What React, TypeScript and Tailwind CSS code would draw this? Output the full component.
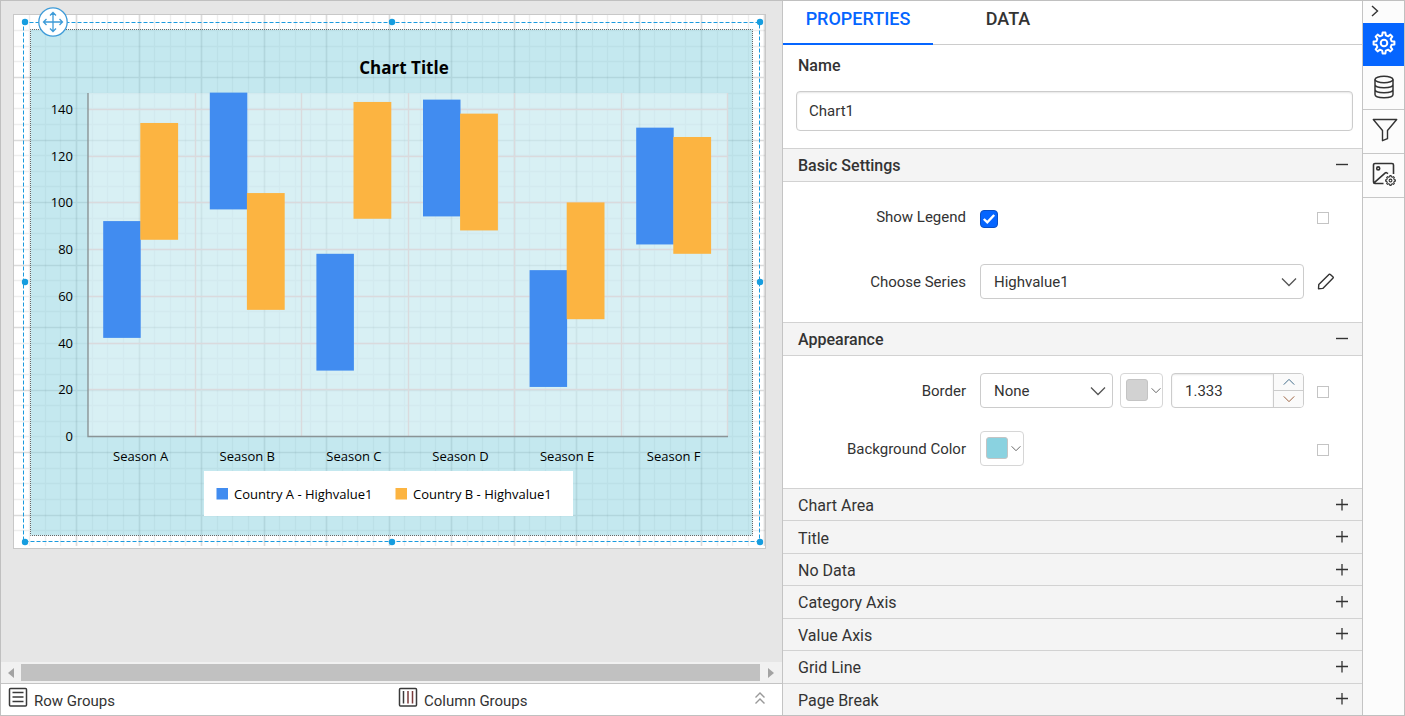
import { useState } from "react";
import type { ReactNode } from "react";

type Range = [number, number];

const seasons: { name: string; a: Range; b: Range }[] = [
  { name: "Season A", a: [42, 92], b: [84, 134] },
  { name: "Season B", a: [97, 147], b: [54, 104] },
  { name: "Season C", a: [28, 78], b: [93, 143] },
  { name: "Season D", a: [94, 144], b: [88, 138] },
  { name: "Season E", a: [21, 71], b: [50, 100] },
  { name: "Season F", a: [82, 132], b: [78, 128] },
];

const ticks = [0, 20, 40, 60, 80, 100, 120, 140];
const collapsed = ["Chart Area", "Title", "No Data", "Category Axis", "Value Axis", "Grid Line", "Page Break"];

const valueY = (v: number) => 421 - v * 2.336;
const bandX = (i: number) => 74.8 + i * 106.5;
const barX = (i: number) => 126.7 + i * 106.6;

const gridStops = (length: number, major: boolean) =>
  Array.from({ length: Math.floor(length / 15.625) }, (_, i) => i + 1)
    .filter((n) => (n % 4 === 0) === major)
    .map((n) => Math.floor(n * 15.625) + 0.5);

const gridPath = (major: boolean) =>
  gridStops(751, major).map((x) => `M${x} 0V531`).join("") + gridStops(531, major).map((y) => `M0 ${y}H751`).join("");

function gearPath(c: number, outer: number, inner: number, teeth: number) {
  const step = (Math.PI * 2) / teeth;
  const points: string[] = [];
  for (let i = 0; i < teeth; i++) {
    const mid = i * step - Math.PI / 2;
    const corners: [number, number][] = [
      [-0.3, inner],
      [-0.17, outer],
      [0.17, outer],
      [0.3, inner],
    ];
    corners.forEach(([t, r]) => {
      const angle = mid + t * step;
      points.push(`${(c + Math.cos(angle) * r).toFixed(2)} ${(c + Math.sin(angle) * r).toFixed(2)}`);
    });
  }
  return `M${points.join("L")}Z`;
}

function Chevron({ className, d = "M1 1.5l7 7 7-7" }: { className: string; d?: string }) {
  return (
    <svg viewBox="0 0 16 10" className={className} fill="none" stroke="currentColor" strokeWidth="1.3" aria-hidden="true">
      <path d={d} />
    </svg>
  );
}

function RangeChart() {
  return (
    <svg viewBox="0 0 751 533" className="block w-full" role="img" aria-label="Chart Title">
      <rect width="751" height="533" fill="#fff" />
      <path d={gridPath(false)} stroke="#000" strokeOpacity="0.065" strokeWidth="1.4" fill="none" />
      <path d={gridPath(true)} stroke="#000" strokeOpacity="0.14" strokeWidth="1.7" fill="none" />
      <rect x="16.5" y="14.5" width="722" height="506" fill="#8ad2e0" fillOpacity="0.5" />
      <rect x="16.5" y="14.5" width="722" height="506" fill="none" stroke="#666" strokeDasharray="1 1" strokeDashoffset="0.5" />
      <rect x="74" y="78" width="640" height="343" fill="#fff" fillOpacity="0.34" />

      <g stroke="#dadadd" strokeWidth="1.4">
        {ticks.slice(1).map((t) => (
          <path key={t} d={`M74 ${Math.round(valueY(t)) + 0.5}H714`} />
        ))}
        {[1, 2, 3, 4, 5, 6].map((i) => (
          <path key={i} d={`M${Math.floor(bandX(i)) + 0.5} 78V421`} />
        ))}
      </g>
      {seasons.map((s, i) => (
        <g key={s.name}>
          <rect x={barX(i) - 37.5} y={valueY(s.a[1])} width="37.5" height={valueY(s.a[0]) - valueY(s.a[1])} fill="#418cf0" />
          <rect x={barX(i) - 0.4} y={valueY(s.b[1])} width="37.8" height={valueY(s.b[0]) - valueY(s.b[1])} fill="#fcb441" />
        </g>
      ))}
      <path d="M74 78V421.500H714" fill="none" stroke="#8a9496" strokeWidth="1.400" />

      <rect x="190" y="456" width="369" height="45" fill="#fff" />
      <rect x="202.5" y="473" width="11.5" height="11.5" fill="#418cf0" />
      <rect x="381.5" y="473" width="11.5" height="11.5" fill="#fcb441" />
      <g className="font-['Open_Sans',sans-serif] text-[13px]" fill="#000">
        {ticks.map((t) => (
          <text key={t} x="59" y={valueY(t) + 5} textAnchor="end">{t}</text>
        ))}
        {seasons.map((s, i) => (
          <text key={s.name} x={barX(i)} y="446" textAnchor="middle">{s.name}</text>
        ))}
        <text x="220" y="484">Country A - Highvalue1</text>
        <text x="399" y="484">Country B - Highvalue1</text>
      </g>
      <text x="390" y="59" textAnchor="middle" className="font-['Open_Sans',sans-serif] text-[17px] font-bold">Chart Title</text>

      <rect x="9.5" y="7.5" width="736" height="519" fill="none" stroke="#1a9ade" strokeDasharray="4 2" />
      <g fill="#169ddf">
        {[[11, 7], [378, 7], [746, 7], [11, 267], [746, 267], [11, 527], [378, 527], [746, 527]].map(([x, y]) => (
          <circle key={`${x}-${y}`} cx={x} cy={y} r="3.2" />
        ))}
      </g>
    </svg>
  );
}

function Designer() {
  return (
    <main className="flex min-w-0 flex-1 flex-col bg-[#e6e6e6]">
      <div className="min-h-0 flex-1 overflow-hidden px-3 pt-[13px]">
        <div className="relative w-[753px] border border-[#c8c8c8]">
          <RangeChart />
          <button aria-label="Move chart" className="absolute -top-[8px] left-6 size-[30px] text-[#3d9bd8]">
            <svg viewBox="0 0 30 30" fill="none" stroke="currentColor" strokeWidth="1.3" aria-hidden="true">
              <circle cx="15" cy="15" r="14.2" fill="#fff" />
              <path d="M15 5.500v19M5.500 15h19M12 8.500l3-3 3 3M12 21.500l3 3 3-3M8.500 12l-3 3 3 3M21.500 12l3 3-3 3" />
            </svg>
          </button>
        </div>
      </div>
      <div className="flex h-[21px] items-center bg-[#f1f1f1]">
        <button aria-label="Scroll left" className="flex w-5 justify-center text-[#a3a3a3]">
          <svg viewBox="0 0 6 10" className="h-[10px] w-[6px]" fill="currentColor"><path d="M6 0v10L0 5z" /></svg>
        </button>
        <div className="h-[17px] flex-1 bg-[#c1c1c1]" />
        <button aria-label="Scroll right" className="flex w-[22px] justify-center text-[#a3a3a3]">
          <svg viewBox="0 0 6 10" className="h-[10px] w-[6px]" fill="currentColor"><path d="M0 0v10l6-5z" /></svg>
        </button>
      </div>
      <div className="flex h-8 items-center border-t border-[#c4c4c4] bg-white pr-3 pl-[7px] text-[15px] text-[#333]">
        <div className="flex w-1/2 gap-[6px]">
          <svg viewBox="0 0 20 20" className="size-5" fill="none" stroke="#3a3a3a" strokeWidth="1.5" aria-hidden="true">
            <rect x="1.500" y="1.500" width="17" height="17.500" rx="1" />
            <path d="M4.500 5.500h11M4.500 10h11M4.500 14.500h11" />
          </svg>
          <span className="pt-[3px]">Row Groups</span>
        </div>
        <div className="ml-[9px] flex flex-1 gap-[6px]">
          <svg viewBox="0 0 20 20" className="size-5" fill="none" stroke="#3a3a3a" strokeWidth="1.5" aria-hidden="true">
            <rect x="1.500" y="1.500" width="17" height="17.500" rx="1" />
            <path d="M5.500 4v12.500" />
            <path d="M10 4v12.500M14.500 4v12.500" stroke="#7a3b3b" />
          </svg>
          <span className="pt-[3px]">Column Groups</span>
        </div>
        <button aria-label="Expand groups" className="pb-1 text-[#999]">
          <svg viewBox="0 0 20 20" className="size-5" fill="none" stroke="currentColor" strokeWidth="1.4">
            <path d="M5.500 9.500L10 5l4.500 4.500M5.500 15.500L10 11l4.500 4.500" />
          </svg>
        </button>
      </div>
    </main>
  );
}

function SectionHeader({ title }: { title: string }) {
  return (
    <button className="flex h-[34px] w-full items-center justify-between border-y border-[#d2d2d2] bg-[#f4f4f4] pr-[14px] pl-[15px] text-[16px] font-medium">
      <span className="pt-[2px]">{title}</span>
      <svg viewBox="0 0 12 12" className="size-3" stroke="#333" strokeWidth="1.4" aria-hidden="true"><path d="M0 5.500h12" /></svg>
    </button>
  );
}

function Row({ label, id, children }: { label: string; id: string; children: ReactNode }) {
  return (
    <div className="flex h-[35px] items-center">
      <label htmlFor={id} className="w-[183px] shrink-0 pt-[2px] text-right text-[15px]">{label}</label>
      <div className="ml-[14px] flex flex-1 items-center pr-[33px]">{children}</div>
    </div>
  );
}

function Marker({ label }: { label: string }) {
  return <input type="checkbox" aria-label={label} className="mt-[2px] ml-auto size-3 appearance-none border border-[#c4c4c4] bg-white" />;
}

function Dropdown({ id, value, className }: { id: string; value: string; className: string }) {
  return (
    <div className={`relative ${className}`}>
      <select id={id} defaultValue={value} className="block h-[35px] w-full appearance-none rounded-[4px] border border-[#ccc] bg-white px-[13px] pt-px text-[15px]">
        <option>{value}</option>
      </select>
      <Chevron className="pointer-events-none absolute top-[13px] right-[7px] h-[10px] w-4 text-[#555]" />
    </div>
  );
}

function ColorPicker({ id, label, swatch, className }: { id: string; label: string; swatch: string; className: string }) {
  return (
    <button id={id} aria-label={label} className={`flex h-[35px] items-center gap-[3px] rounded-[4px] border border-[#d6d6d6] bg-white pl-[5px] ${className}`}>
      <span className={`-mt-[2px] size-[22px] rounded-[3px] border border-[#c4c4c4] ${swatch}`} />
      <Chevron className="h-[7px] w-[10px] text-[#444]" />
    </button>
  );
}

function Properties() {
  const [legend, setLegend] = useState(true);
  return (
    <aside className="flex w-[580px] shrink-0 flex-col border-l border-[#c4c4c4] bg-white">
      <div role="tablist" className="flex h-11 border-b border-[#ccc] text-[18px] font-medium">
        <button role="tab" aria-selected="true" className="-mb-px w-[150px] border-b-2 border-[#0565ff] pb-2 text-[#0565ff]">PROPERTIES</button>
        <button role="tab" aria-selected="false" className="w-[150px] pb-[9px]">DATA</button>
      </div>
      <div className="h-[103px] pt-[10px] pr-[9px] pl-[13px]">
        <label htmlFor="name" className="block pl-[2px] text-[16px] leading-[22px] font-medium">Name</label>
        <input id="name" defaultValue="Chart1" className="mt-[14px] h-10 w-full rounded-[4px] border border-[#ccc] px-3 text-[15px] shadow-[inset_0_1px_2px_rgba(0,0,0,0.1)]" />
      </div>
      <SectionHeader title="Basic Settings" />
      <div className="flex h-[140px] flex-col gap-[30px] pt-[17px]">
        <Row label="Show Legend" id="legend">
          <span className="relative mt-1 size-[18px]">
            <input id="legend" type="checkbox" checked={legend} onChange={(e) => setLegend(e.target.checked)} className="block size-[18px] appearance-none rounded-[4px] border border-[#0a4fc4] checked:bg-[#0565ff]" />
            {legend && (
              <svg viewBox="0 0 18 18" className="pointer-events-none absolute inset-0" fill="none" stroke="#fff" strokeWidth="2.4" aria-hidden="true"><path d="M3.800 9l3.500 3.300L14.200 5" /></svg>
            )}
          </span>
          <Marker label="Show Legend expression" />
        </Row>
        <Row label="Choose Series" id="series">
          <Dropdown id="series" value="Highvalue1" className="w-[324px]" />
          <button aria-label="Edit series" className="ml-[12px]">
            <svg viewBox="0 0 20 20" className="size-5" fill="none" stroke="#333" strokeWidth="1.4" strokeLinejoin="round">
              <path d="M2.500 16.800l.3-4.400L13.200 2.300c.3-.3.600-.3.900 0l3 2.800c.3.300.3.600 0 .9L6.800 16.400z" />
            </svg>
          </button>
        </Row>
      </div>
      <SectionHeader title="Appearance" />
      <div className="flex h-[132px] flex-col gap-[23px] pt-[17px]">
        <Row label="Border" id="border">
          <Dropdown id="border" value="None" className="w-[133px]" />
          <ColorPicker id="border-color" label="Border color" swatch="bg-[#d2d2d2]" className="ml-[7px] w-[43px]" />
          <div className="ml-2 flex h-[35px] w-[133px] overflow-hidden rounded-[4px] border border-[#ccc]">
            <input aria-label="Border width" defaultValue="1.333" className="min-w-0 flex-1 px-[13px] pt-px text-[15px] shadow-[inset_0_1px_2px_rgba(0,0,0,0.1)]" />
            <div className="flex w-[30px] flex-col border-l border-[#ccc] bg-[#fafafa]">
              <button aria-label="Increase" className="flex flex-1 items-center justify-center border-b border-[#ccc] text-[#3f6a88]">
                <Chevron className="h-[8px] w-[12px]" d="M1 8.500l7-7 7 7" />
              </button>
              <button aria-label="Decrease" className="flex flex-1 items-center justify-center text-[#9a5f3c]">
                <Chevron className="h-[8px] w-[12px]" />
              </button>
            </div>
          </div>
          <Marker label="Border expression" />
        </Row>
        <Row label="Background Color" id="background">
          <ColorPicker id="background" label="Background Color" swatch="bg-[#8ad2e0]" className="w-11" />
          <Marker label="Background Color expression" />
        </Row>
      </div>
      <div className="flex flex-1 flex-col">
        {collapsed.map((title) => (
          <button key={title} className="flex min-h-8 flex-1 items-center justify-between border-t border-[#d2d2d2] bg-[#f4f4f4] pr-[14px] pl-[15px] text-[16px]">
            <span className="pt-[3px]">{title}</span>
            <svg viewBox="0 0 12 12" className="size-3" stroke="#333" strokeWidth="1.3" aria-hidden="true"><path d="M0 5.500h12M6 0v11.500" /></svg>
          </button>
        ))}
      </div>
    </aside>
  );
}

function ToolStrip() {
  return (
    <nav className="flex w-[42px] shrink-0 flex-col border-l border-[#c4c4c4] bg-[#fcfcfc] text-[#333]">
      <button aria-label="Collapse panel" className="flex h-[22px] items-center pb-[2px] pl-[7px]">
        <svg viewBox="0 0 10 12" className="h-3 w-[10px]" fill="none" stroke="currentColor" strokeWidth="1.4"><path d="M2 1l5.500 5L2 11" /></svg>
      </button>
      <button aria-label="Properties" className="flex h-[43px] items-center justify-center bg-[#0565ff] pb-[4px] text-white">
        <svg viewBox="0 0 26 26" className="size-[26px]" fill="none" stroke="currentColor" strokeWidth="2" strokeLinejoin="round">
          <path d={gearPath(13, 10.500, 7.800, 8)} />
          <circle cx="13" cy="13" r="3.300" />
        </svg>
      </button>
      <button aria-label="Data" className="flex h-11 items-center justify-center border-b border-[#c8c8c8] pb-[2px]">
        <svg viewBox="0 0 24 26" className="h-[26px] w-6" fill="none" stroke="currentColor" strokeWidth="1.500">
          <ellipse cx="12" cy="5.500" rx="9" ry="3.200" />
          <path d="M3 5.500v15c0 4.200 18 4.200 18 0v-15M3 10.500c0 4.200 18 4.200 18 0M3 15.500c0 4.200 18 4.200 18 0" />
        </svg>
      </button>
      <button aria-label="Filters" className="flex h-11 items-center justify-center border-b border-[#c8c8c8] pb-[3px] pl-[2px]">
        <svg viewBox="0 0 26 24" className="h-6 w-[26px]" fill="none" stroke="currentColor" strokeWidth="1.400" strokeLinejoin="round">
          <path d="M1.300 1.500h23.400L15.500 12.500v8.200l-5 2V12.500z" />
        </svg>
      </button>
      <button aria-label="Image settings" className="flex h-11 items-center justify-center border-b border-[#c8c8c8] pb-[3px]">
        <svg viewBox="0 0 24 24" className="size-6" fill="none" stroke="currentColor" strokeWidth="1.600">
          <path d="M11.500 21.500H3a1.500 1.500 0 0 1-1.500-1.500V3A1.500 1.500 0 0 1 3 1.500h17A1.500 1.500 0 0 1 21.500 3v9M2 20.800L13.300 10.800c.5-.4 1-.4 1.500 0l1.200.9" />
          <circle cx="6.200" cy="6.400" r="1.500" />
          <g strokeWidth="1.100" strokeLinejoin="round">
            <path d={gearPath(18.500, 4.900, 3.800, 8)} />
            <circle cx="18.500" cy="18.500" r="1.400" />
          </g>
        </svg>
      </button>
    </nav>
  );
}

export default function App() {
  return (
    <div className="flex min-h-screen w-full border border-[#c0c0c0] font-[Roboto,sans-serif] text-[#333]">
      <Designer />
      <Properties />
      <ToolStrip />
    </div>
  );
}
